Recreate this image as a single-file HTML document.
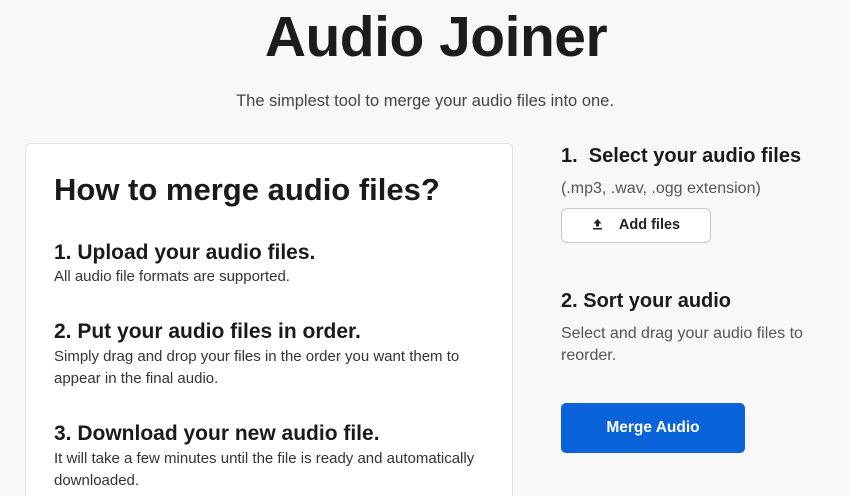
<!DOCTYPE html>
<html><head><meta charset="utf-8"><style>
*{margin:0;padding:0;box-sizing:border-box}
html,body{width:850px;height:496px;overflow:hidden}
body{background:#f8f8f8;font-family:"Liberation Sans",sans-serif;color:#1a1a1a;position:relative}
.a{position:absolute;white-space:nowrap}
h1{position:absolute;left:11px;width:850px;text-align:center;top:4px;font-size:57px;font-weight:bold;letter-spacing:-0.5px;color:#1c1c1c}
.sub{left:0;width:850px;text-align:center;top:92px;font-size:16.5px;color:#444}
.card{position:absolute;left:25px;top:143px;width:488px;height:360px;background:#fff;border:1px solid #e4e4e4;border-radius:6px}
.h2{font-size:31px;font-weight:bold;left:54px;top:172px}
.h3{font-size:21px;font-weight:bold;left:54px}
.p{font-size:15px;color:#333;left:54px;line-height:21.5px}
.r3{font-size:20px;font-weight:bold;left:561px}
.rp{font-size:16px;color:#555;left:561px;line-height:22px}
.btn{position:absolute;left:561px;top:208px;width:150px;height:35px;border:1px solid #c8c8c8;border-radius:6px;background:#fff;font-size:14.5px;font-weight:bold;color:#222;text-align:center;line-height:33px}
.merge{position:absolute;left:561px;top:403px;width:184px;height:50px;background:#0a63d9;border-radius:5px;color:#fff;font-weight:bold;font-size:15.5px;text-align:center;line-height:50px}
</style></head><body>
<h1>Audio Joiner</h1>
<div class="a sub">The simplest tool to merge your audio files into one.</div>
<div class="card"></div>
<div class="a h2">How to merge audio files?</div>
<div class="a h3" style="top:241px">1. Upload your audio files.</div>
<div class="a p" style="top:266px">All audio file formats are supported.</div>
<div class="a h3" style="top:320px">2. Put your audio files in order.</div>
<div class="a p" style="top:346px">Simply drag and drop your files in the order you want them to<br>appear in the final audio.</div>
<div class="a h3" style="top:422px">3. Download your new audio file.</div>
<div class="a p" style="top:448px">It will take a few minutes until the file is ready and automatically<br>downloaded.</div>
<div class="a r3" style="top:145px">1.&nbsp; Select your audio files</div>
<div class="a rp" style="top:178px">(.mp3, .wav, .ogg extension)</div>
<div class="btn"><svg width="11" height="12" viewBox="0 0 11 12" style="vertical-align:-1px;margin-right:16px"><path d="M5.5 1L1.5 5.5H4V8.5H7V5.5H9.5Z M1 10H10V11.5H1Z" fill="#222"/></svg>Add files</div>
<div class="a r3" style="top:290px">2. Sort your audio</div>
<div class="a rp" style="top:323px">Select and drag your audio files to<br>reorder.</div>
<div class="merge">Merge Audio</div>
</body></html>
